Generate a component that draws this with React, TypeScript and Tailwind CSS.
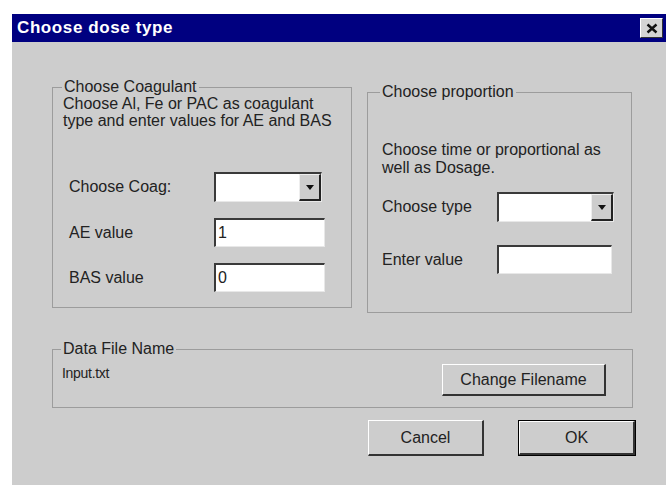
import React from "react";

// Classic Windows-style "Choose dose type" dialog.

function Sunken({ w, h, value }: { w: string; h: string; value?: string }) {
  return (
    <div
      className={`${w} ${h} bg-white border-t-2 border-l-2 border-r border-b border-t-[#3a3a3a] border-l-[#3a3a3a] border-r-[#e8e8e8] border-b-[#e8e8e8] flex items-center pl-[2px] text-[16px] leading-[18px]`}
    >
      {value}
    </div>
  );
}

function Combo({ w }: { w: string }) {
  return (
    <div
      className={`${w} h-[30px] bg-white border-t-2 border-l-2 border-r border-b border-t-[#3a3a3a] border-l-[#3a3a3a] border-r-[#e8e8e8] border-b-[#e8e8e8] flex justify-end`}
    >
      <div className="w-[22px] h-full bg-[#cdcdcd] border-t border-l border-t-[#eeeeee] border-l-[#eeeeee] border-r-2 border-b-2 border-r-[#222] border-b-[#222] flex items-center justify-center">
        <svg width="8" height="5" viewBox="0 0 8 5">
          <path d="M0 0 H8 L4 5 Z" fill="#111" />
        </svg>
      </div>
    </div>
  );
}

function Button({ label, w, h, isDefault }: { label: string; w: string; h: string; isDefault?: boolean }) {
  const face = (
    <div
      className={`w-full h-full bg-[#cdcdcd] border-t border-l border-t-white border-l-white border-r-2 border-b-2 border-r-[#333] border-b-[#333] flex items-center justify-center text-[16px] leading-[18px] text-[#222]`}
    >
      {label}
    </div>
  );
  if (isDefault) {
    return <div className={`${w} ${h} border border-black`}>{face}</div>;
  }
  return <div className={`${w} ${h}`}>{face}</div>;
}

function GroupLabel({ children, ml }: { children: React.ReactNode; ml: string }) {
  return (
    <span className={`block w-fit ${ml} -mt-[10px] px-[2px] bg-[#cdcdcd] text-[16px] leading-[18px] text-[#222]`}>
      {children}
    </span>
  );
}

export default function App() {
  return (
    <div className="w-[666px] h-[485px] bg-white pt-[14px] pl-[12px] font-['Liberation_Sans',Arial,sans-serif] text-[#222] overflow-hidden">
      <div className="h-full bg-[#cdcdcd] flex flex-col">
        {/* Title bar */}
        <div className="h-[28px] bg-[#000080] flex items-center justify-between pl-[5px] pr-[3px]">
          <span className="text-white font-bold text-[17px] leading-[20px] tracking-[0.6px]">Choose dose type</span>
          <div className="w-[23px] h-[20px] bg-[#d4d4d4] border-t border-l border-t-white border-l-white border-r border-b border-r-[#333] border-b-[#333] flex items-center justify-center">
            <svg width="12" height="11" viewBox="0 0 12 11">
              <path d="M1.5 1.5 L10.5 9.5 M10.5 1.5 L1.5 9.5" stroke="#111" strokeWidth="2.4" />
            </svg>
          </div>
        </div>

        {/* Body */}
        <div className="pl-[40px] pr-[30px] pt-[45px] flex flex-col">
          <div className="flex items-start gap-[15px]">
            {/* Coagulant group */}
            <div className="w-[300px] h-[221px] border border-[#9c9c9c] px-[10px]">
              <GroupLabel ml="ml-[-1px]">Choose Coagulant</GroupLabel>
              <p className="mt-[-1px] text-[16px] leading-[17px]">
                Choose Al, Fe or PAC as coagulant
                <br />
                type and enter values for AE and BAS
              </p>
              <div className="mt-[43px] flex flex-col gap-[16px] pl-[6px]">
                <div className="flex items-center">
                  <span className="w-[145px] text-[16px]">Choose Coag:</span>
                  <Combo w="w-[108px]" />
                </div>
                <div className="flex items-center">
                  <span className="w-[145px] text-[16px]">AE value</span>
                  <Sunken w="w-[111px]" h="h-[29px]" value="1" />
                </div>
                <div className="flex items-center">
                  <span className="w-[145px] text-[16px]">BAS value</span>
                  <Sunken w="w-[111px]" h="h-[29px]" value="0" />
                </div>
              </div>
            </div>

            {/* Proportion group */}
            <div className="mt-[5px] w-[265px] h-[221px] border border-[#9c9c9c] pl-[14px]">
              <GroupLabel ml="ml-[-2px]">Choose proportion</GroupLabel>
              <p className="mt-[40px] text-[16px] leading-[18px]">
                Choose time or proportional as
                <br />
                well as Dosage.
              </p>
              <div className="mt-[15px] flex items-center">
                <span className="w-[115px] text-[16px]">Choose type</span>
                <Combo w="w-[117px]" />
              </div>
              <div className="mt-[23px] flex items-center">
                <span className="w-[115px] text-[16px]">Enter value</span>
                <Sunken w="w-[115px]" h="h-[29px]" />
              </div>
            </div>
          </div>

          {/* Data file group */}
          <div className="mt-[36px] w-[581px] h-[59px] border border-[#9c9c9c] pl-[9px] pr-[26px]">
            <GroupLabel ml="ml-[-1px]">Data File Name</GroupLabel>
            <div className="mt-[6px] flex items-start justify-between">
              <span className="text-[14px] leading-[18px] tracking-[-0.3px]">Input.txt</span>
              <Button label="Change Filename" w="w-[164px]" h="h-[32px]" />
            </div>
          </div>

          {/* Dialog buttons */}
          <div className="mt-[12px] flex justify-end gap-[34px]">
            <Button label="Cancel" w="w-[116px]" h="h-[36px]" />
            <Button label="OK" w="w-[118px]" h="h-[36px]" isDefault />
          </div>
        </div>
      </div>
    </div>
  );
}
